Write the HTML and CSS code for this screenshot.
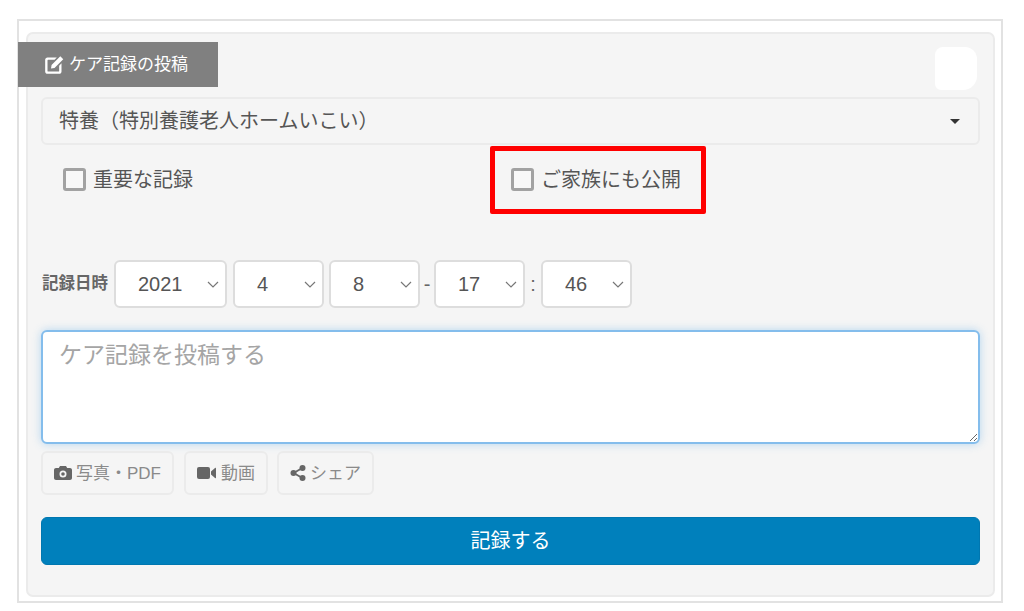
FILE: index.html
```html
<!DOCTYPE html>
<html lang="ja">
<head>
<meta charset="utf-8">
<title>ケア記録の投稿</title>
<link rel="stylesheet" href="styles.css">
</head>
<body>
<div class="frame">
  <form class="panel">
    <div class="tab-row">
      <div class="tab">
        <svg class="tab-icon" viewBox="0 0 18 18"><path d="M3 3h8L9 5H3.500C3.200 5 3 5.200 3 5.500v9c0 .3.200.5.500.5h9c.3 0 .5-.2.500-.5V10l2-2v7c0 1.100-.9 2-2 2H3c-1.100 0-2-.9-2-2V5c0-1.100.9-2 2-2z" fill="#fff"/><path d="M6.500 9.500 14 2l2.500 2.500L9 12l-3 .5z" fill="#fff"/></svg>
        <span class="lift">ケア記録の投稿</span>
      </div>
      <div class="blob"></div>
    </div>
    <div class="facility">
      <span class="lift">特養（特別養護老人ホームいこい）</span>
      <span class="caret"></span>
    </div>
    <div class="checks">
      <label class="check check-first"><span class="box"></span><span class="lift">重要な記録</span></label>
      <label class="check check-family"><span class="box"></span><span class="lift">ご家族にも公開</span></label>
    </div>
    <div class="date-row">
      <span class="date-label lift">記録日時</span>
      <div class="sel sel-year"><span>2021</span><svg class="chev" viewBox="0 0 12 7"><path d="M1 1l5 5 5-5" fill="none" stroke="#777" stroke-width="1.200"/></svg></div>
      <div class="sel sel-mon"><span>4</span><svg class="chev" viewBox="0 0 12 7"><path d="M1 1l5 5 5-5" fill="none" stroke="#777" stroke-width="1.200"/></svg></div>
      <div class="sel sel-day"><span>8</span><svg class="chev" viewBox="0 0 12 7"><path d="M1 1l5 5 5-5" fill="none" stroke="#777" stroke-width="1.200"/></svg></div>
      <span class="sep sep-dash">-</span>
      <div class="sel sel-hour"><span>17</span><svg class="chev" viewBox="0 0 12 7"><path d="M1 1l5 5 5-5" fill="none" stroke="#777" stroke-width="1.200"/></svg></div>
      <span class="sep sep-colon">:</span>
      <div class="sel sel-min"><span>46</span><svg class="chev" viewBox="0 0 12 7"><path d="M1 1l5 5 5-5" fill="none" stroke="#777" stroke-width="1.200"/></svg></div>
    </div>
    <textarea class="note" placeholder="ケア記録を投稿する"></textarea>
    <div class="tools">
      <div class="tool tool-photo">
        <svg class="tool-icon" viewBox="0 0 18 16"><path fill-rule="evenodd" d="M6 1h6l1.200 2H16c1.100 0 2 .9 2 2v8c0 1.100-.9 2-2 2H2c-1.100 0-2-.9-2-2V5c0-1.100.9-2 2-2h2.800zM9 5.500a3.500 3.500 0 1 0 0 7 3.500 3.500 0 0 0 0-7zm0 1.700a1.800 1.800 0 1 1 0 3.600 1.800 1.800 0 0 1 0-3.600z" fill="#666"/></svg>
        <span class="lift">写真・PDF</span>
      </div>
      <div class="tool tool-video">
        <svg class="tool-icon-v" viewBox="0 0 20 14"><rect x="0" y="1" width="13" height="12" rx="2" fill="#666"/><path d="M14 5.500 18 2c.6-.5 1-.2 1 .4v9.200c0 .6-.4.900-1 .4l-4-3.500z" fill="#666"/></svg>
        <span class="lift">動画</span>
      </div>
      <div class="tool tool-share">
        <svg class="tool-icon-s" viewBox="0 0 16 16"><circle cx="3.500" cy="8" r="3" fill="#666"/><circle cx="12.500" cy="3" r="3" fill="#666"/><circle cx="12.500" cy="13" r="3" fill="#666"/><path d="M3.500 8 12.500 3M3.500 8l9 5" stroke="#666" stroke-width="2"/></svg>
        <span class="lift">シェア</span>
      </div>
    </div>
    <button class="submit" type="button"><span class="lift-block">記録する</span></button>
  </form>
</div>
</body>
</html>
```
FILE: styles.css
```css
* { box-sizing: border-box; }
html, body { margin: 0; padding: 0; background: #fff; }
body {
  width: 1024px;
  height: 611px;
  overflow: hidden;
  padding: 19px 21px 9px 17px;
  font-family: "Liberation Sans", "Noto Sans CJK JP", sans-serif;
  color: #555;
}
.lift { margin-bottom: 4px; }
.lift-block { display: block; margin-bottom: 4px; }
.frame {
  height: 584px;
  border: 2px solid #e2e2e2;
  padding: 11px 6px 5px 7px;
}
.panel {
  height: 565px;
  background: #f5f5f5;
  border: 2px solid #ebebeb;
  border-radius: 7px;
  padding: 8px 13px 0 13px;
  display: flex;
  flex-direction: column;
}
.tab-row {
  display: flex;
  justify-content: space-between;
  height: 47px;
}
.tab {
  margin-left: -23px;
  width: 200px;
  height: 45px;
  background: #808080;
  color: #fff;
  display: flex;
  align-items: center;
  padding-left: 26px;
  gap: 4px;
  font-size: 17px;
}
.tab-icon { width: 21px; height: 21px; }
.blob {
  width: 42px;
  height: 43px;
  margin: 5px 3px 0 0;
  background: #fff;
  border-radius: 8px 12px 14px 6px;
}
.facility {
  height: 48px;
  margin-top: 8px;
  border: 2px solid #ebebeb;
  border-radius: 6px;
  display: flex;
  align-items: center;
  justify-content: space-between;
  padding: 0 18px 0 16px;
  font-size: 20px;
  color: #555;
}
.caret {
  width: 0;
  height: 0;
  border-left: 5px solid transparent;
  border-right: 5px solid transparent;
  border-top: 5px solid #333;
}
.checks {
  display: flex;
  height: 69px;
  margin-top: 1px;
}
.check {
  display: flex;
  align-items: center;
  gap: 7px;
  font-size: 20px;
  color: #555;
}
.check-first {
  width: 449px;
  padding-left: 22px;
  margin-top: -1px;
}
.check-family {
  width: 216px;
  height: 68px;
  border: 5px solid #f00;
  border-radius: 2px;
  padding-left: 16px;
  gap: 7px;
}
.box {
  width: 23px;
  height: 23px;
  border: 3px solid #a2a2a2;
  border-radius: 3px;
  background: #f8f8f8;
  margin-bottom: 2px;
}
.date-row {
  display: flex;
  align-items: center;
  margin-top: 45px;
  height: 48px;
}
.date-label {
  width: 72px;
  font-size: 16.500px;
  font-weight: 700;
  color: #666;
  white-space: nowrap;
  margin-left: 1px;
}
.sel {
  height: 48px;
  background: #fff;
  border: 2px solid #ddd;
  border-radius: 6px;
  display: flex;
  align-items: center;
  justify-content: space-between;
  padding: 0 6px 0 22px;
  font-size: 20px;
  color: #555;
}
.sel-year { width: 113px; }
.sel-mon { width: 91px; margin-left: 6px; }
.sel-day { width: 91px; margin-left: 5px; }
.sel-hour { width: 91px; }
.sel-min { width: 91px; }
.chev { width: 12px; height: 7px; margin-left: auto; }
.sep { font-size: 20px; text-align: center; color: #666; }
.sep-dash { width: 14px; }
.sep-colon { width: 16px; }
.note {
  display: block;
  width: 939px;
  height: 114px;
  margin-top: 22px;
  border: 2px solid #84bdec;
  border-radius: 6px;
  background: #fff;
  box-shadow: 0 0 8px rgba(102, 175, 233, .45);
  outline: none;
  padding: 4px 16px;
  font-family: "Liberation Sans", "Noto Sans CJK JP", sans-serif;
  font-size: 23px;
  color: #555;
}
.note::placeholder { color: #a5a5a5; opacity: 1; }
.tools {
  display: flex;
  margin-top: 7px;
  height: 44px;
}
.tool {
  height: 44px;
  border: 2px solid #ebebeb;
  border-radius: 6px;
  display: flex;
  align-items: center;
  gap: 4px;
  padding-left: 11px;
  font-size: 17px;
  color: #8a8a8a;
  white-space: nowrap;
}
.tool-photo { width: 133px; }
.tool-video { width: 84px; margin-left: 10px; }
.tool-share { width: 97px; margin-left: 9px; }
.tool-icon { width: 18px; height: 16px; }
.tool-icon-v { width: 20px; height: 14px; }
.tool-icon-s { width: 16px; height: 16px; }
.submit {
  display: block;
  width: 939px;
  height: 48px;
  margin-top: 22px;
  border: 1px solid #0077b0;
  border-radius: 6px;
  background: #0080bc;
  color: #fff;
  font-family: "Liberation Sans", "Noto Sans CJK JP", sans-serif;
  font-size: 20px;
}
```
